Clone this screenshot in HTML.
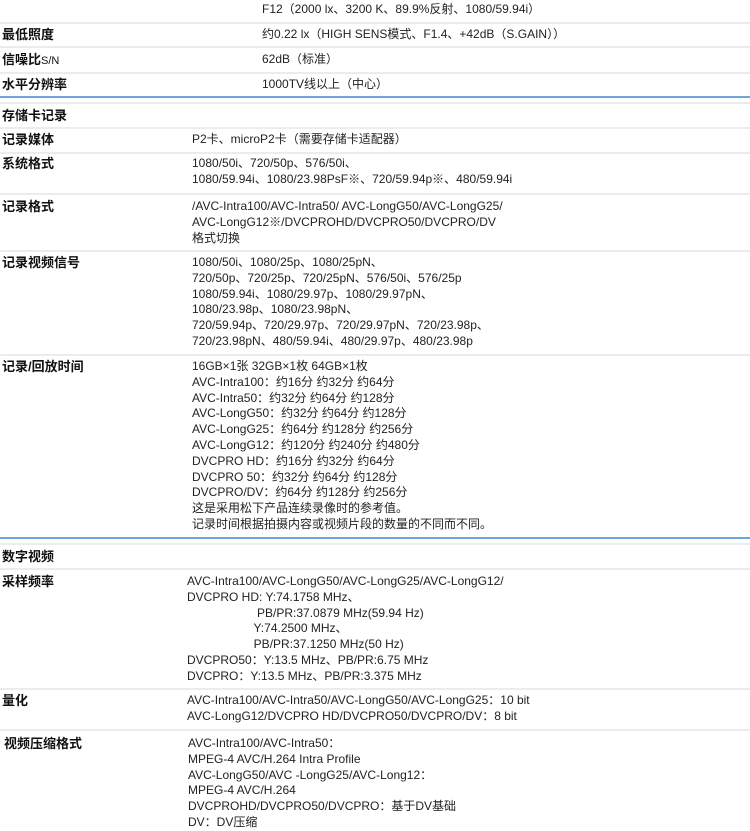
<!DOCTYPE html><html><head><meta charset="utf-8"><style>
body{margin:0;width:750px;height:828px;overflow:hidden;background:#fff;font-family:"Liberation Sans","Noto Sans CJK SC",sans-serif;font-size:12px;color:#222;position:relative}
.l{position:absolute;left:2px;font-weight:bold;font-size:13px;line-height:16px;color:#111}
.v{position:absolute;line-height:15.8px;white-space:pre}
.g{position:absolute;left:0;width:750px;height:2px;background:#ececec}
.b{position:absolute;left:0;width:750px;height:2px;background:#6ea6dc}
</style></head><body>
<div class="v" style="left:262px;top:2px">F12（2000 lx、3200 K、89.9%反射、1080/59.94i）</div>
<div class="g" style="top:22px"></div>
<div class="l" style="top:27px">最低照度</div><div class="v" style="left:262px;top:27px">约0.22 lx（HIGH SENS模式、F1.4、+42dB（S.GAIN））</div>
<div class="g" style="top:46px"></div>
<div class="l" style="top:52px">信噪比<span style="font-weight:normal;font-size:11px">S/N</span></div><div class="v" style="left:262px;top:52px">62dB（标准）</div>
<div class="g" style="top:72px"></div>
<div class="l" style="top:77px">水平分辨率</div><div class="v" style="left:262px;top:77px">1000TV线以上（中心）</div>
<div class="b" style="top:96px"></div>
<div class="g" style="top:102px"></div>
<div class="l" style="top:108px">存储卡记录</div>
<div class="g" style="top:127px"></div>
<div class="l" style="top:132px">记录媒体</div><div class="v" style="left:192px;top:132px">P2卡、microP2卡（需要存储卡适配器）</div>
<div class="g" style="top:152px"></div>
<div class="l" style="top:156px">系统格式</div><div class="v" style="left:192px;top:156px">1080/50i、720/50p、576/50i、
1080/59.94i、1080/23.98PsF※、720/59.94p※、480/59.94i</div>
<div class="g" style="top:193px"></div>
<div class="l" style="top:199px">记录格式</div><div class="v" style="left:192px;top:199px">/AVC-Intra100/AVC-Intra50/ AVC-LongG50/AVC-LongG25/
AVC-LongG12※/DVCPROHD/DVCPRO50/DVCPRO/DV
格式切换</div>
<div class="g" style="top:250px"></div>
<div class="l" style="top:255px">记录视频信号</div><div class="v" style="left:192px;top:255px">1080/50i、1080/25p、1080/25pN、
720/50p、720/25p、720/25pN、576/50i、576/25p
1080/59.94i、1080/29.97p、1080/29.97pN、
1080/23.98p、1080/23.98pN、
720/59.94p、720/29.97p、720/29.97pN、720/23.98p、
720/23.98pN、480/59.94i、480/29.97p、480/23.98p</div>
<div class="g" style="top:354px"></div>
<div class="l" style="top:359px">记录/回放时间</div><div class="v" style="left:192px;top:359px">16GB×1张 32GB×1枚 64GB×1枚
AVC-Intra100：约16分 约32分 约64分
AVC-Intra50：约32分 约64分 约128分
AVC-LongG50：约32分 约64分 约128分
AVC-LongG25：约64分 约128分 约256分
AVC-LongG12：约120分 约240分 约480分
DVCPRO HD：约16分 约32分 约64分
DVCPRO 50：约32分 约64分 约128分
DVCPRO/DV：约64分 约128分 约256分
这是采用松下产品连续录像时的参考值。
记录时间根据拍摄内容或视频片段的数量的不同而不同。</div>
<div class="b" style="top:537px"></div>
<div class="g" style="top:543px"></div>
<div class="l" style="top:549px">数字视频</div>
<div class="g" style="top:568px"></div>
<div class="l" style="top:574px">采样频率</div><div class="v" style="left:187px;top:574px">AVC-Intra100/AVC-LongG50/AVC-LongG25/AVC-LongG12/
DVCPRO HD: Y:74.1758 MHz、
                     PB/PR:37.0879 MHz(59.94 Hz)
                    Y:74.2500 MHz、
                    PB/PR:37.1250 MHz(50 Hz)
DVCPRO50：Y:13.5 MHz、PB/PR:6.75 MHz
DVCPRO：Y:13.5 MHz、PB/PR:3.375 MHz</div>
<div class="g" style="top:688px"></div>
<div class="l" style="top:693px">量化</div><div class="v" style="left:187px;top:693px">AVC-Intra100/AVC-Intra50/AVC-LongG50/AVC-LongG25：10 bit
AVC-LongG12/DVCPRO HD/DVCPRO50/DVCPRO/DV：8 bit</div>
<div class="g" style="top:729px"></div>
<div class="l" style="top:736px;left:4px">视频压缩格式</div><div class="v" style="left:188px;top:736px">AVC-Intra100/AVC-Intra50：
MPEG-4 AVC/H.264 Intra Profile
AVC-LongG50/AVC -LongG25/AVC-Long12：
MPEG-4 AVC/H.264
DVCPROHD/DVCPRO50/DVCPRO：基于DV基础
DV：DV压缩</div>
</body></html>
